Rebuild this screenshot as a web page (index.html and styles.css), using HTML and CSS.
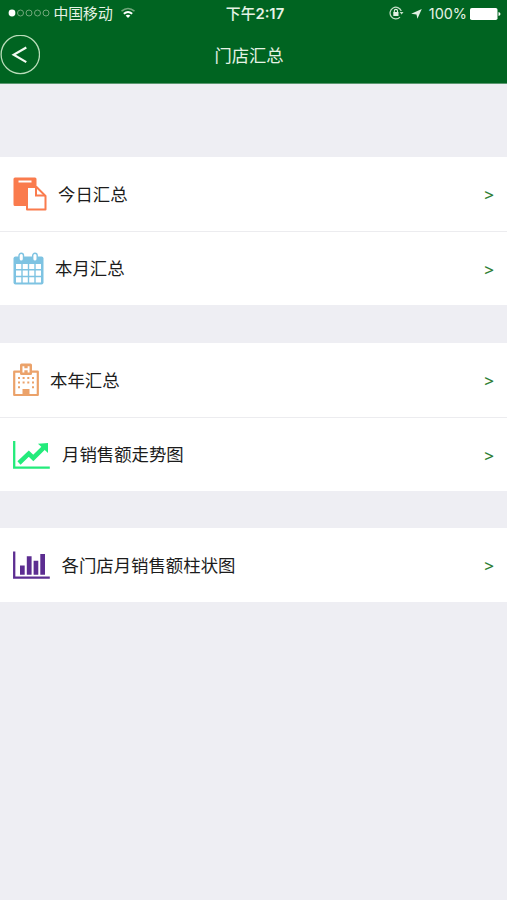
FILE: index.html
```html
<!DOCTYPE html>
<html lang="zh-CN">
<head>
<meta charset="utf-8">
<title>门店汇总</title>
<link rel="stylesheet" href="styles.css">
</head>
<body>
<header class="header">
  <div class="status">
    <div class="status-left">
      <svg class="signal" width="42" height="10" viewBox="0 0 42 10"><circle cx="4" cy="5" r="3.4" fill="#fff"/><g fill="none" stroke="#72a77b" stroke-width="1"><circle cx="12.5" cy="5" r="3"/><circle cx="21" cy="5" r="3"/><circle cx="29.5" cy="5" r="3"/><circle cx="38" cy="5" r="3"/></g></svg>
      <span class="carrier">中国移动</span>
      <svg class="wifi" width="16" height="12" viewBox="0 0 16 12" fill="none"><path d="M1.5 4.2Q8-1.2 14.5 4.2" stroke="#72a77b" stroke-width="1.5"/><path d="M3.8 6.7Q8 3.2 12.2 6.7" stroke="#fff" stroke-width="1.8"/><path d="M5.6 8.6Q8 6.8 10.4 8.6L8 11Z" fill="#fff"/></svg>
    </div>
    <span class="time">下午<span class="digits">2:17</span></span>
    <div class="status-right">
      <svg class="lock" width="15" height="14" viewBox="0 0 15 14" fill="none"><path d="M12.3 5A5.8 5.8 0 1 0 11 11.1" stroke="#c5dfc8" stroke-width="1.2"/><path d="M10.7 5.9h3.8l-1.9 2.5z" fill="#c5dfc8"/><path d="M5.3 6.5V5a1.6 1.6 0 0 1 3.2 0v1.5" stroke="#e2f0e3" stroke-width="1.1"/><rect x="4.3" y="6" width="5.2" height="4" fill="#e2f0e3"/></svg>
      <svg class="locate" width="11" height="10" viewBox="0 0 11 10"><path d="M10.8 0L6.4 9.8 5.5 5.5.2 4.7Z" fill="#e2f0e3"/></svg>
      <span class="percent">100%</span>
      <svg class="battery" width="31" height="12" viewBox="0 0 31 12" fill="#fff"><rect x="0" y="0" width="27.5" height="12" rx="1.8"/><path d="M28.5 4Q30.5 4.5 30.5 6T28.5 8Z"/></svg>
    </div>
  </div>
  <nav class="nav">
    <button class="back" aria-label="返回"><svg width="40" height="40" viewBox="0 0 40 40" fill="none"><circle cx="20.3" cy="19.5" r="19.2" stroke="#b8dcb9" stroke-width="1.3"/><path d="M26.3 12.5L13.7 19.8l12.6 7.3" stroke="#f2faf1" stroke-width="2.2"/></svg></button>
    <h1 class="title">门店汇总</h1>
  </nav>
</header>
<main class="content">
  <section class="group">
    <a class="row">
      <svg width="34" height="34" viewBox="0 0 34 34"><path d="M2 .5H22Q23.5.5 23.5 2V10H14V29H2Q.5 29 .5 27.5V2Q.5.5 2 .5Z" fill="#fa7b4d"/><path d="M5.5 4.5H18.5" stroke="#fff" stroke-width="2"/><path d="M14 10H23.5L32.5 19V32.5H14Z" fill="#fff" stroke="#fa7b4d" stroke-width="2" stroke-linejoin="round"/><path d="M23 10V18.5H32" fill="none" stroke="#fa7b4d" stroke-width="2"/></svg>
      <span class="label">今日汇总</span><span class="arrow"></span>
    </a>
    <a class="row">
      <svg width="31" height="34" viewBox="0 0 31 34"><rect x=".5" y="4.5" width="30" height="28" rx="2" fill="#7ec3e2"/><g fill="#fff"><path d="M3 12h5.3v5H3zM9.7 12h5.1v5H9.7zM16.2 12h5.1v5h-5.1zM22.7 12H28v5h-5.3zM3 18.4h5.3v5.4H3zM9.7 18.4h5.1v5.4H9.7zM16.2 18.4h5.1v5.4h-5.1zM22.7 18.4H28v5.4h-5.3zM3 25.2h5.3v5.3H3zM9.7 25.2h5.1v5.3H9.7zM16.2 25.2h5.1v5.3h-5.1zM22.7 25.2H28v5.3h-5.3z"/><g stroke="#7ec3e2" stroke-width="1.4"><rect x="6" y="1.3" width="4.5" height="8" rx="2.2"/><rect x="19.7" y="1.3" width="4.5" height="8" rx="2.2"/></g></g></svg>
      <span class="label">本月汇总</span><span class="arrow"></span>
    </a>
  </section>
  <section class="group">
    <a class="row">
      <svg width="26" height="34" viewBox="0 0 26 34" fill="#eba26a"><path d="M1.2 8.7H24.8V32H1.2Z" fill="#fff" stroke="#eba26a" stroke-width="2.2" stroke-linejoin="round"/><rect x="7" y=".5" width="12" height="11.5" rx="1.5"/><path d="M10.4 3.2V9.4M15.6 3.2V9.4M10.4 6.3H15.6" stroke="#fff" stroke-width="1.9"/><path d="M5 14h2v2H5zM9.6 14h2v2h-2zM14.3 14h2v2h-2zM19 14h2v2h-2zM5 18.5h2v2H5zM9.6 18.5h2v2h-2zM14.3 18.5h2v2h-2zM19 18.5h2v2h-2zM5 23.2h2v2H5zM19 23.2h2v2h-2zM9.5 26h7v6h-7z"/></svg>
      <span class="label">本年汇总</span><span class="arrow"></span>
    </a>
    <a class="row">
      <svg width="38" height="30" viewBox="0 0 38 30"><path d="M1.2 1V27.6H36.8" fill="none" stroke="#23eb7b" stroke-width="2.3"/><path d="M6 23L15.8 13.7 20.3 18 30.5 7.8" fill="none" stroke="#23eb7b" stroke-width="4.6"/><path d="M25 3.7L35 3V13Z" fill="#23eb7b"/></svg>
      <span class="label">月销售额走势图</span><span class="arrow"></span>
    </a>
  </section>
  <section class="group">
    <a class="row">
      <svg width="37.5" height="30" viewBox="0 0 37.5 30"><path d="M1.2 1.5V27.6H36.8" fill="none" stroke="#5c2d91" stroke-width="2.3"/><path d="M7 15.5h4.7V24.7H7zM13.8 6.2h4.8V24.7h-4.8zM20.6 10.8h4.7V24.7h-4.7zM27.3 4h4.7V24.7h-4.7z" fill="#5c2d91"/></svg>
      <span class="label">各门店月销售额柱状图</span><span class="arrow"></span>
    </a>
  </section>
</main>
</body>
</html>
```
FILE: styles.css
```css
* { box-sizing: border-box; }
body {
  margin: 0;
  min-height: 900px;
  background: #eeeef3;
  color: #1c1c1c;
  font-family: "Noto Sans CJK SC", sans-serif;
}
svg { display: block; flex: none; }
.header {
  height: 84px;
  background: #006421;
  border-bottom: 1px solid #5b9770;
  color: #e6f3e5;
}
.status {
  display: grid;
  grid-template-columns: 1fr auto 1fr;
  align-items: center;
  height: 27px;
  padding: 0 6px 0 8px;
  font-size: 14.8px;
  line-height: 26px;
}
.status-left, .status-right { display: flex; align-items: center; }
.status-right { justify-content: flex-end; }
.signal { margin-top: -1px; }
.carrier { margin: -1px 7px 0 3.5px; }
.wifi { margin-top: -1px; }
.time { margin-top: -1px; padding-left: 1px; font-size: 14.8px; font-weight: 500; }
.digits { font-family: Inter, sans-serif; font-size: 14.8px; font-weight: 600; }
.lock { margin-top: -1px; }
.locate { margin: 0 7px 0 7px; }
.percent { margin-right: 3px; font-family: Inter, sans-serif; font-size: 14.4px; }
.nav {
  display: grid;
  grid-template-columns: 40px 1fr 40px;
  align-items: center;
  height: 56px;
}
.back { padding: 0; border: 0; background: none; width: 40px; height: 40px; }
.title {
  margin: 0;
  padding: 0 9px 1px 0;
  font-size: 17.3px;
  font-weight: 400;
  line-height: 25px;
  text-align: center;
}
.content { padding-top: 73px; }
.group { margin-bottom: 38px; background: #fff; }
.group + .group { margin-bottom: 37px; }
.row {
  display: flex;
  align-items: center;
  gap: 11.5px;
  height: 74px;
  padding: 0 13px 0 12.5px;
}
.row + .row { border-top: 1px solid #ececef; }
.label { flex: 1; padding-bottom: 1px; font-size: 17.4px; line-height: 25px; }
.row + .row .label { padding-bottom: 2px; }
.arrow::after {
  content: ">";
  color: #2f8035;
  font-family: "Noto Sans", sans-serif;
  font-size: 17px;
  font-weight: 500;
}
```
